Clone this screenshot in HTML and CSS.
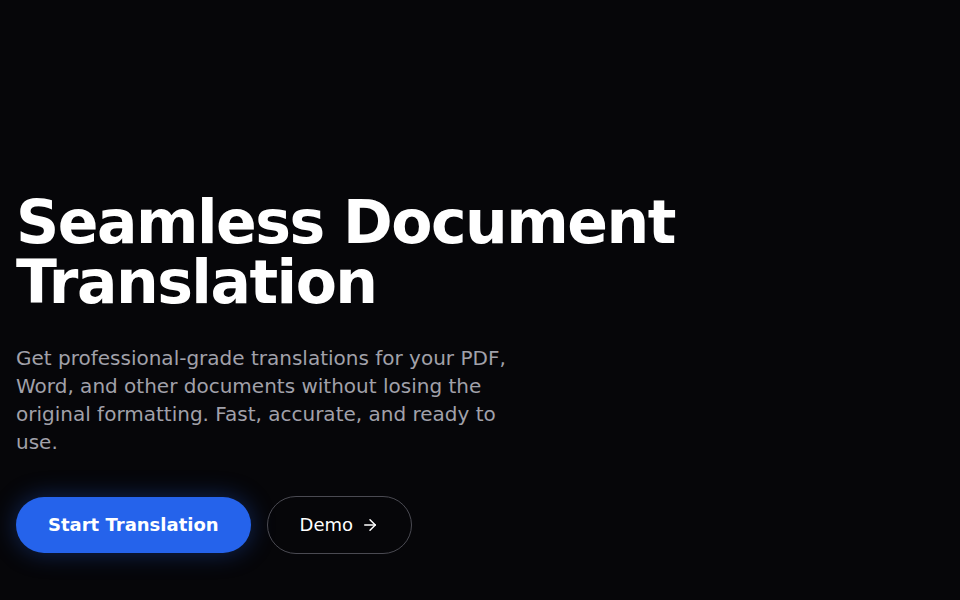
FILE: index.html
```html
<!DOCTYPE html>
<html lang="en">
<head>
<meta charset="utf-8">
<title>Seamless Document Translation</title>
<link rel="stylesheet" href="styles.css">
</head>
<body>
<main class="hero">
  <h1 class="hero-title">Seamless Document<br>Translation</h1>
  <p class="hero-text">Get professional-grade translations for your PDF, Word, and other documents without losing the original formatting. Fast, accurate, and ready to use.</p>
  <div class="hero-actions">
    <a class="btn btn-primary" href="#">Start Translation</a>
    <a class="btn btn-outline" href="#">Demo
      <svg class="btn-icon" viewBox="0 0 24 24" width="18" height="18" fill="none" stroke="currentColor" stroke-width="2" stroke-linecap="round" stroke-linejoin="round"><path d="M5 12h14"/><path d="m12 5 7 7-7 7"/></svg>
    </a>
  </div>
</main>
</body>
</html>
```
FILE: styles.css
```css
html, body {
  margin: 0;
  padding: 0;
  background: #060609;
  height: 100%;
}
body {
  font-family: "DejaVu Sans", sans-serif;
  color: #ffffff;
}
.hero {
  padding: 192px 16px 0 16px;
  display: flex;
  flex-direction: column;
  align-items: flex-start;
}
.hero-title {
  margin: 0;
  font-size: 60px;
  line-height: 60px;
  font-weight: 700;
  letter-spacing: -0.025em;
  color: #ffffff;
}
.hero-text {
  margin: 32px 0 0 0;
  max-width: 512px;
  font-size: 20px;
  line-height: 28px;
  color: #a1a1aa;
}
.hero-actions {
  margin-top: 40px;
  display: flex;
  align-items: center;
  gap: 16px;
}
.btn {
  display: inline-flex;
  align-items: center;
  gap: 8px;
  padding: 16px 32px;
  font-size: 18px;
  line-height: 24px;
  border-radius: 9999px;
  text-decoration: none;
  color: #ffffff;
}
.btn-primary {
  background: #2563eb;
  font-weight: 700;
  box-shadow: 0 0 24px rgba(37, 99, 235, 0.35);
}
.btn-outline {
  background: transparent;
  border: 1px solid #4a4a52;
}
.btn-icon {
  display: block;
}
```
